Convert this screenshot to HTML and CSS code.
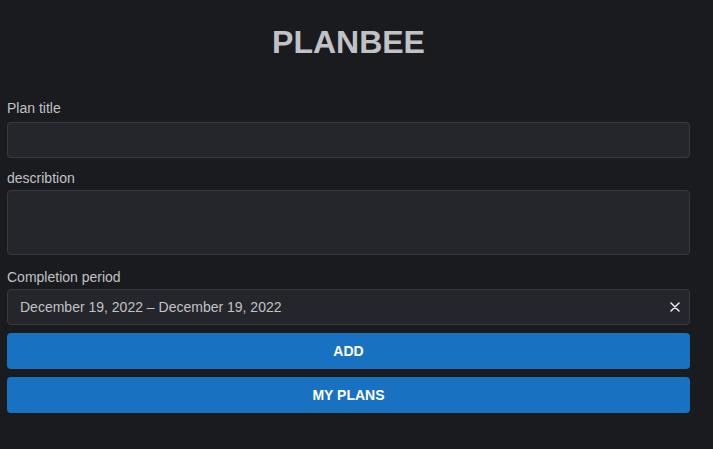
FILE: index.html
```html
<!DOCTYPE html>
<html lang="en">
<head>
<meta charset="utf-8">
<title>PLANBEE</title>
<link rel="stylesheet" href="styles.css">
</head>
<body>
<main class="container">
  <h1 class="title">PLANBEE</h1>
  <form class="form">
    <div class="field field-first">
      <label class="label" for="title">Plan title</label>
      <input class="input" id="title" type="text">
    </div>
    <div class="field">
      <label class="label" for="desc">describtion</label>
      <textarea class="input textarea" id="desc"></textarea>
    </div>
    <div class="field field-last">
      <label class="label">Completion period</label>
      <div class="input date">
        <span class="date-text">December 19, 2022 – December 19, 2022</span>
        <button type="button" class="clear" aria-label="Clear">
          <svg width="10" height="10" viewBox="0 0 10 10"><path d="M1 1L9 9M9 1L1 9" stroke="currentColor" stroke-width="1.5" stroke-linecap="round"/></svg>
        </button>
      </div>
    </div>
    <button type="button" class="btn">ADD</button>
    <button type="button" class="btn">MY PLANS</button>
  </form>
</main>
</body>
</html>
```
FILE: styles.css
```css
html, body {
  margin: 0;
  background: #1a1b1e;
  font-family: "Liberation Sans", Arial, sans-serif;
  color: #c1c2c5;
}
.container {
  padding: 0 23px 0 7px;
}
.title {
  margin: 22px 0 35px;
  font-size: 32px;
  line-height: 40px;
  font-weight: 700;
  text-align: center;
  color: #c1c2c5;
}
.form {
  display: flex;
  flex-direction: column;
}
.field {
  display: flex;
  flex-direction: column;
  margin-bottom: 11px;
}
.field-first {
  margin-bottom: 9px;
}
.field-first .label {
  margin-bottom: 3px;
}
.field-last {
  margin-bottom: 8px;
}
.label {
  font-size: 14px;
  line-height: 22px;
  color: #c1c2c5;
  margin-bottom: 1px;
}
.input {
  box-sizing: border-box;
  height: 36px;
  background: #25262b;
  border: 1px solid #373a40;
  border-radius: 4px;
  color: #c1c2c5;
  font-family: inherit;
  font-size: 14px;
  padding: 0 12px;
  outline: none;
}
.textarea {
  height: 65px;
  resize: none;
}
.date {
  display: flex;
  align-items: center;
  justify-content: space-between;
  padding-right: 6px;
}
.date-text {
  font-size: 14px;
  color: #c1c2c5;
}
.clear {
  display: flex;
  align-items: center;
  justify-content: center;
  background: none;
  border: 0;
  padding: 0;
  width: 16px;
  height: 16px;
  color: #e9ecef;
}
.btn {
  box-sizing: border-box;
  height: 36px;
  margin-bottom: 8px;
  background: #1971c2;
  color: #ffffff;
  border: 0;
  border-radius: 4px;
  font-family: inherit;
  font-size: 14px;
  font-weight: 700;
  cursor: pointer;
}
```
